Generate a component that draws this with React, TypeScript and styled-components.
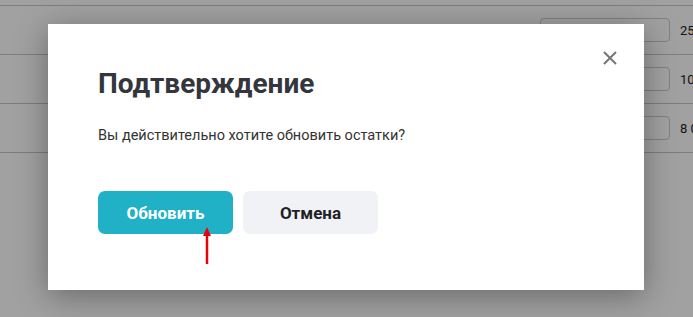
import styled, { createGlobalStyle } from "styled-components";

const GlobalStyle = createGlobalStyle`
  html, body {
    margin: 0;
    padding: 0;
    width: 693px;
    height: 317px;
    overflow: hidden;
    font-family: Roboto, "Liberation Sans", sans-serif;
    background: #ffffff;
  }
`;

const Page = styled.div`
  position: relative;
  width: 693px;
  height: 317px;
  overflow: hidden;
`;

const Table = styled.div`
  display: flex;
  flex-direction: column;
  padding-top: 5px;
`;

const Row = styled.div`
  display: flex;
  align-items: center;
  justify-content: flex-end;
  height: 48px;
  border-top: 1px solid #c6c6c6;
  gap: 10px;
`;

const Field = styled.div`
  width: 128px;
  height: 22px;
  border: 1px solid #cbcbcb;
  border-radius: 4px;
  background: #fff;
`;

const Amount = styled.span`
  width: 13px;
  overflow: hidden;
  white-space: nowrap;
  font-size: 13px;
  color: #222;
`;

const Overlay = styled.div`
  position: absolute;
  inset: 0;
  background: rgba(0, 0, 0, 0.37);
  display: flex;
  align-items: flex-start;
  justify-content: flex-start;
  padding: 24px 0 0 48px;
`;

const Modal = styled.div`
  position: relative;
  box-sizing: border-box;
  width: 596px;
  height: 266px;
  background: #fff;
  padding: 41px 50px 0;
  box-shadow: 0 6px 30px rgba(0, 0, 0, 0.35);
`;

const Close = styled.button`
  position: absolute;
  top: 24px;
  right: 24px;
  width: 20px;
  height: 20px;
  padding: 0;
  border: 0;
  background: none;
  display: flex;
  align-items: center;
  justify-content: center;
`;

const Title = styled.h2`
  margin: 0;
  font-size: 28px;
  line-height: 38px;
  font-weight: 700;
  color: #33373d;
`;

const Text = styled.p`
  margin: 23px 0 0;
  font-size: 14.5px;
  line-height: 20px;
  color: #333;
`;

const Actions = styled.div`
  display: flex;
  gap: 10px;
  margin-top: 45px;
`;

const Button = styled.button<{ $primary?: boolean }>`
  position: relative;
  width: 135px;
  height: 43px;
  border: 0;
  border-radius: 7px;
  font-family: Roboto, "Liberation Sans", sans-serif;
  font-size: 17px;
  font-weight: 700;
  background: ${(p) => (p.$primary ? "#20b1c6" : "#f1f2f6")};
  color: ${(p) => (p.$primary ? "#fff" : "#1e2126")};
`;

const Arrow = styled.svg`
  position: absolute;
  left: 104px;
  top: 36px;
`;

export default function App() {
  return (
    <Page>
      <GlobalStyle />
      <Table>
        <Row>
          <Field />
          <Amount>25</Amount>
        </Row>
        <Row>
          <Field />
          <Amount>10</Amount>
        </Row>
        <Row>
          <Field />
          <Amount>8 0</Amount>
        </Row>
        <Row />
      </Table>
      <Overlay>
        <Modal>
          <Close aria-label="Закрыть">
            <svg width="16" height="16" viewBox="0 0 16 16">
              <path d="M2 2L14 14M14 2L2 14" stroke="#757575" strokeWidth="2" />
            </svg>
          </Close>
          <Title>Подтверждение</Title>
          <Text>Вы действительно хотите обновить остатки?</Text>
          <Actions>
            <Button $primary>
              Обновить
              <Arrow width="10" height="38" viewBox="0 0 10 38">
                <path d="M5 0L9 9H1Z" fill="#e8000b" />
                <path d="M5 7V37" stroke="#e8000b" strokeWidth="2.5" />
              </Arrow>
            </Button>
            <Button>Отмена</Button>
          </Actions>
        </Modal>
      </Overlay>
    </Page>
  );
}
